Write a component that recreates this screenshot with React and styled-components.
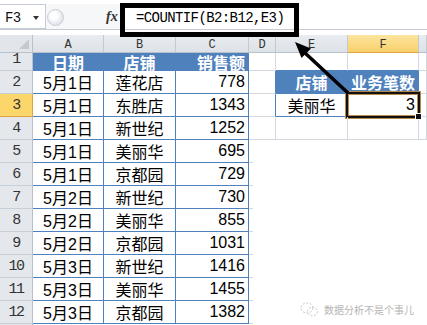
import React from 'react';
import styled, { createGlobalStyle, css } from 'styled-components';

const Global = createGlobalStyle`
html, body {
  margin: 0;
  padding: 0;
  background: #ffffff;
  overflow: hidden;
}
body {
  font-family: "Liberation Sans", "Noto Sans CJK SC", sans-serif;
}
`

const BLUE = '#4f81bd';
const GRID = '#d4d8de';

const Page = styled.div`
position: relative;
width: 427px;
height: 325px;
overflow: hidden;
background: #ffffff;
`

const FormulaBar = styled.div`
display: flex;
align-items: stretch;
height: 25px;
margin-top: 4px;
border-bottom: 1px solid #c5ccd5;
background: #f6f7f9;
`

const NameBox = styled.div`
display: flex;
align-items: center;
justify-content: space-between;
width: 46px;
box-sizing: border-box;
padding: 2px 6px 0 5px;
background: #ffffff;
border: 1px solid #c5ccd5;
border-left: none;
font-family: "Liberation Mono", monospace;
font-size: 14px;
letter-spacing: -0.6px;
color: #111;
`

const Caret = styled.span`
width: 0;
height: 0;
border-left: 3.5px solid transparent;
border-right: 3.5px solid transparent;
border-top: 4px solid #333;
margin-top: 1px;
`

const Handle = styled.div`
width: 15px;
height: 15px;
margin: 5px 0 0 1px;
border-radius: 50%;
border: 1px solid #c9ced6;
background: radial-gradient(circle at 40% 40%, #ffffff 0 25%, #e7eaee 60%, #d5dae0 100%);
`

const Fx = styled.div`
display: flex;
align-items: center;
margin-left: auto;
width: 14px;
font-family: "Liberation Serif", serif;
font-style: italic;
font-weight: bold;
font-size: 14px;
color: #333;
`

const FormulaInput = styled.div`
display: flex;
align-items: center;
width: 307px;
box-sizing: border-box;
padding: 2px 0 0 15px;
background: #ffffff;
border-left: 1px solid #c5ccd5;
font-family: "Liberation Mono", monospace;
font-size: 14px;
letter-spacing: -0.6px;
color: #000;
`

const Gap = styled.div`
height: 5px;
`

const Sheet = styled.div`
display: grid;
grid-template-columns: 33px 71px 72px 73px 27px 72px 71px 1fr;
grid-template-rows: 18px 18px repeat(12, 23px);
`

const headerLook = css`
display: flex;
justify-content: center;
box-sizing: border-box;
color: #333;
font-family: "Liberation Mono", monospace;
background: ${p => p.$on ? 'linear-gradient(#fce5a0, #f8d06a)' : 'linear-gradient(#e9ecf0, #dde2e8)'};
`

const Corner = styled.div`
position: relative;
box-sizing: border-box;
background: #e2e6eb;
border-right: 1px solid #b8c0ca;
border-bottom: 1px solid #b8c0ca;
&::after {
  content: '';
  position: absolute;
  right: 3px;
  bottom: 3px;
  border-left: 10px solid transparent;
  border-bottom: 10px solid #c3c9d1;
}
`

const ColHead = styled.div`
${headerLook}
align-items: center;
padding-top: 3px;
font-size: 12px;
border-right: 1px solid #c3cad3;
border-bottom: 1px solid ${p => p.$on ? '#e1a33d' : '#b8c0ca'};
`

const RowHead = styled.div`
${headerLook}
align-items: flex-end;
padding-bottom: 2px;
font-size: 15px;
letter-spacing: -1.5px;
line-height: 16px;
background: ${p => p.$on ? '#fbd66b' : '#e4e8ec'};
border-right: 1px solid ${p => p.$on ? '#e1a33d' : '#b8c0ca'};
border-bottom: 1px solid ${p => p.$on ? '#e1a33d' : '#c9cfd7'};
`

const Cell = styled.div`
position: relative;
display: flex;
align-items: center;
justify-content: ${p => p.$align === 'right' ? 'flex-end' : 'center'};
box-sizing: border-box;
padding: 0 ${p => p.$align === 'right' ? '3px' : '0'} 0 0;
font-size: 16px;
color: #000;
white-space: nowrap;
border-right: 1px solid ${p => p.$edge === 'right' || p.$tone !== 'plain' ? BLUE : GRID};
border-bottom: 1px solid ${p => p.$edge === 'bottom' || p.$tone !== 'plain' ? BLUE : GRID};

${p => p.$tone === 'head' && css`
  background: ${BLUE};
  color: #ffffff;
  font-weight: bold;
`}

${p => p.$tone === 'bare' && css`
  border: none;
  background: ${p.$stub ? `linear-gradient(${GRID}, ${GRID}) left bottom / 4px 1px no-repeat` : 'none'};
`}

${p => p.$selected && css`
  &::after {
    content: '';
    position: absolute;
    left: -2px;
    top: -2px;
    right: -2px;
    bottom: -2px;
    border: 2px solid #111;
    box-shadow: 0 0 0 1px #b98a4c, inset 0 0 0 1px #b98a4c;
  }
  &::before {
    content: '';
    position: absolute;
    right: -4px;
    bottom: -4px;
    width: 5px;
    height: 5px;
    background: #111;
    border: 1px solid #fff;
    z-index: 1;
  }
`}
`

const Frame = styled.div`
position: absolute;
left: 120px;
top: 3px;
width: 179px;
height: 34px;
box-sizing: border-box;
border: 5px solid #000;
`

const Overlay = styled.svg`
position: absolute;
left: 0;
top: 0;
pointer-events: none;
`

const Watermark = styled.div`
position: absolute;
left: 300px;
top: 302px;
display: flex;
align-items: center;
gap: 5px;
font-family: "Noto Sans CJK SC", sans-serif;
font-size: 10px;
color: #a8a8a8;
opacity: 0.85;
`

const rows = [
  ['5月1日', '莲花店', 778],
  ['5月1日', '东胜店', 1343],
  ['5月1日', '新世纪', 1252],
  ['5月1日', '美丽华', 695],
  ['5月1日', '京都园', 729],
  ['5月2日', '新世纪', 730],
  ['5月2日', '美丽华', 855],
  ['5月2日', '京都园', 1031],
  ['5月3日', '新世纪', 1416],
  ['5月3日', '美丽华', 1455],
  ['5月3日', '京都园', 1382],
];

const letters = ['A', 'B', 'C', 'D', 'E', 'F', ''];

// cells right of the data table, D..G, for each sheet row
function sideCells(r) {
  if (r === 1) {
    return [
      <Cell key="d" $tone="plain" />,
      <Cell key="e" $tone="plain" $edge="bottom" />,
      <Cell key="f" $tone="plain" $edge="bottom" />,
      <Cell key="g" $tone="plain" />,
    ];
  }
  if (r === 2) {
    return [
      <Cell key="d" $tone="plain" $edge="right" />,
      <Cell key="e" $tone="head">店铺</Cell>,
      <Cell key="f" $tone="head">业务笔数</Cell>,
      <Cell key="g" $tone="plain" />,
    ];
  }
  if (r === 3) {
    return [
      <Cell key="d" $tone="plain" $edge="right" />,
      <Cell key="e" $tone="blue">美丽华</Cell>,
      <Cell key="f" $tone="plain" $align="right" $selected>3</Cell>,
      <Cell key="g" $tone="plain" />,
    ];
  }
  if (r === 4) {
    return ['d', 'e', 'f', 'g'].map(k => <Cell key={k} $tone="plain" />);
  }
  return [
    <Cell key="d" $tone="bare" $stub />,
    <Cell key="e" $tone="bare" />,
    <Cell key="f" $tone="bare" />,
    <Cell key="g" $tone="bare" />,
  ];
}

function App() {
  return (
    <>
      <Global />
      <Page>
        <FormulaBar>
          <NameBox>F3<Caret /></NameBox>
          <Handle />
          <Fx>fx</Fx>
          <FormulaInput>=COUNTIF(B2:B12,E3)</FormulaInput>
        </FormulaBar>
        <Gap />
        <Sheet>
          <Corner />
          {letters.map((l, i) => (
            <ColHead key={i} $on={l === 'F'}>{l}</ColHead>
          ))}

          <RowHead>1</RowHead>
          <Cell $tone="head">日期</Cell>
          <Cell $tone="head">店铺</Cell>
          <Cell $tone="head" $align="right">销售额</Cell>
          {sideCells(1)}

          {rows.map((row, i) => (
            <React.Fragment key={i}>
              <RowHead $on={i + 2 === 3}>{i + 2}</RowHead>
              <Cell $tone="blue">{row[0]}</Cell>
              <Cell $tone="blue">{row[1]}</Cell>
              <Cell $tone="blue" $align="right">{row[2]}</Cell>
              {sideCells(i + 2)}
            </React.Fragment>
          ))}

          <RowHead />
        </Sheet>

        <Frame />
        <Overlay width="427" height="325">
          <line x1="348" y1="93" x2="304" y2="52" stroke="#000" strokeWidth="3.5" />
          <polygon points="295,42 301.5,58 311,48.5" fill="#000" />
        </Overlay>

        <Watermark>
          <svg width="19" height="15" viewBox="0 0 19 15">
            <ellipse cx="7" cy="6" rx="6" ry="5" fill="none" stroke="#bdbdbd" strokeWidth="1" strokeDasharray="2 1.5" />
            <ellipse cx="12.5" cy="9.5" rx="5" ry="4.2" fill="none" stroke="#bdbdbd" strokeWidth="1" strokeDasharray="2 1.5" />
          </svg>
          <span>数据分析不是个事儿</span>
        </Watermark>
      </Page>
    </>
  );
}

export default App;
